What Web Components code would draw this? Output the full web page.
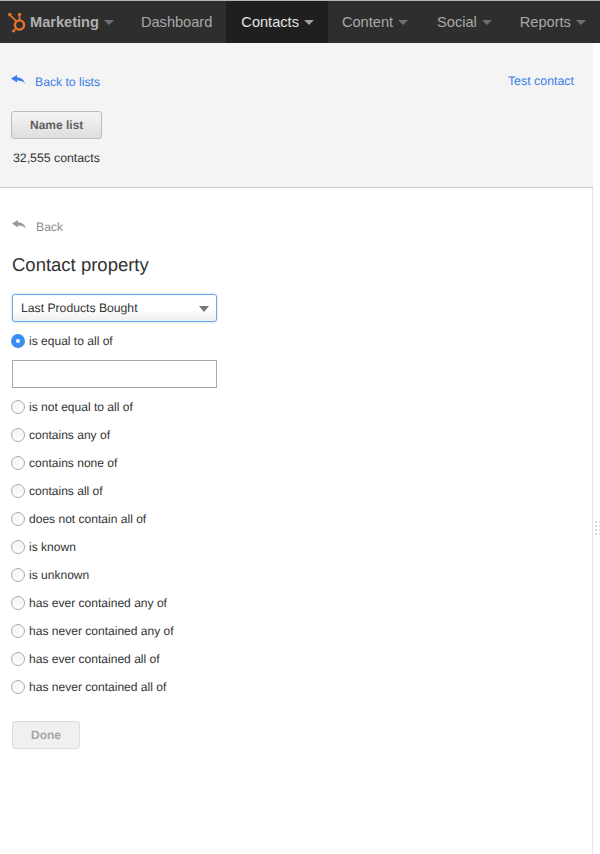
<!DOCTYPE html>
<html>
<head>
<meta charset="utf-8">
<title>Contact property</title>
<style>
  html, body { margin: 0; padding: 0; background: #fff; }
  body { font-family: "Liberation Sans", Arial, sans-serif; font-size: 12px; color: #333; text-rendering: geometricPrecision; }
</style>
</head>
<body>
<app-shell>
  <top-nav>
    <nav-item brand caret>Marketing</nav-item>
    <nav-item>Dashboard</nav-item>
    <nav-item active caret>Contacts</nav-item>
    <nav-item wide caret>Content</nav-item>
    <nav-item caret>Social</nav-item>
    <nav-item caret>Reports</nav-item>
  </top-nav>
  <list-header count="32,555 contacts"></list-header>
  <property-form></property-form>
</app-shell>

<script>
// small reply arrow used by both back links
const replyArrow = (color) => `
  <svg width="14" height="9" viewBox="0 0 14 11" preserveAspectRatio="none" aria-hidden="true">
    <path fill="${color}" d="M0 4.2 6 0v2.6c4 .2 7 2.3 8 8.4-1.6-3.6-4.2-4.4-8-4.4v2.6z"/>
  </svg>`;

class AppShell extends HTMLElement {
  constructor() {
    super();
    this.attachShadow({ mode: 'open' });
    this.shadowRoot.innerHTML = `
      <style>
        :host { display: block; width: 600px; height: 854px; overflow: hidden; position: relative; }
        .grip {
          position: absolute; left: 595px; top: 521px;
          display: grid; grid-template-columns: 2px 1px; column-gap: 2px; row-gap: 2px;
        }
        .grip i { display: block; height: 2px; background: #ddd; }
      </style>
      <slot></slot>
      <div class="grip">${'<i></i>'.repeat(8)}</div>
    `;
  }
}

class TopNav extends HTMLElement {
  constructor() {
    super();
    this.attachShadow({ mode: 'open' });
    this.shadowRoot.innerHTML = `
      <style>
        :host {
          display: flex; height: 42px; padding-top: 1px;
          background: linear-gradient(#b5b5b5 0 1px, #2e2e2e 1px);
        }
      </style>
      <slot></slot>
    `;
  }
}

class NavItem extends HTMLElement {
  constructor() {
    super();
    this.attachShadow({ mode: 'open' });
    const brand = this.hasAttribute('brand');
    const logo = brand ? `
      <svg class="logo" width="20" height="22" viewBox="0 0 20 22" aria-hidden="true">
        <g fill="none" stroke="#e8722c">
          <circle cx="12.5" cy="14" r="4.6" stroke-width="2.4"/>
          <path stroke-width="1.7" d="M12.5 9V4M3 4l6.2 6.2M7.5 19l2-2"/>
        </g>
        <g fill="#e8722c">
          <circle cx="12.5" cy="3.4" r="1.7"/>
          <circle cx="2.8" cy="3.6" r="1.8"/>
          <circle cx="6.6" cy="19.8" r="1.6"/>
        </g>
      </svg>` : '';
    const caret = this.hasAttribute('caret') ? '<span class="caret"></span>' : '';
    this.shadowRoot.innerHTML = `
      <style>
        :host {
          display: flex; align-items: center; box-sizing: border-box; height: 42px;
          padding: 0 14px; font-size: 14.6px; color: #a9a9a9; white-space: nowrap;
          text-rendering: auto;
        }
        :host([brand]) { padding: 0 13px 0 7px; font-weight: bold; color: #b0b0b0; }
        :host([active]) { background: #1f1f1f; color: #e4e4e4; padding: 0 14px 0 15px; }
        :host([wide]) { padding-right: 15px; }
        .logo { margin-right: 3px; margin-top: -1px; }
        .caret {
          width: 0; height: 0; margin-left: 5px; margin-top: 1px;
          border-left: 5px solid transparent; border-right: 5px solid transparent;
          border-top: 5px solid #6e6e6e;
        }
        :host([active]) .caret { border-top-color: #a0a0a0; }
      </style>
      ${logo}<slot></slot>${caret}
    `;
  }
}

class BackLink extends HTMLElement {
  constructor() {
    super();
    this.attachShadow({ mode: 'open' });
    const color = this.getAttribute('color') || '#3a7fe8';
    const iconColor = this.getAttribute('icon-color') || color;
    this.shadowRoot.innerHTML = `
      <style>
        :host { display: inline-flex; align-items: flex-start; font-size: 12.2px; color: ${color}; line-height: 14px; }
        svg { margin-right: 10px; margin-top: 1px; flex: none; }
        span { padding-top: 1px; }
      </style>
      ${replyArrow(iconColor)}<span><slot></slot></span>
    `;
  }
}

class HsButton extends HTMLElement {
  constructor() {
    super();
    this.attachShadow({ mode: 'open' });
    this.shadowRoot.innerHTML = `
      <style>
        :host {
          display: inline-flex; align-items: center; justify-content: center; box-sizing: border-box;
          height: 28px; padding: 0 18px; border: 1px solid #bdbdbd; border-radius: 3px;
          font-size: 12px; font-weight: bold; color: #5f5f5f;
          background: linear-gradient(#f5f5f5, #dedede);
        }
        :host([disabled]) {
          padding: 0 18px; border-color: #dcdcdc; color: #a5a5a5;
          background: #f0f0f0;
        }
      </style>
      <slot></slot>
    `;
  }
}

class ListHeader extends HTMLElement {
  constructor() {
    super();
    this.attachShadow({ mode: 'open' });
    this.shadowRoot.innerHTML = `
      <style>
        :host {
          display: block; box-sizing: border-box; width: 593px; height: 145px;
          padding: 31px 19px 0 11px; background: #f4f4f4; border-bottom: 1px solid #c9c9c9;
        }
        .top { display: flex; justify-content: space-between; height: 37px; }
        .test { font-size: 12.4px; line-height: 14px; color: #3a7fe8; }
        .count { margin: 12px 0 0 2px; font-size: 12.3px; line-height: 14px; color: #333; }
      </style>
      <div class="top">
        <back-link>Back to lists</back-link>
        <span class="test">Test contact</span>
      </div>
      <hs-button>Name list</hs-button>
      <div class="count">${this.getAttribute('count')}</div>
    `;
  }
}

class SelectBox extends HTMLElement {
  constructor() {
    super();
    this.attachShadow({ mode: 'open' });
    this.shadowRoot.innerHTML = `
      <style>
        :host {
          display: flex; align-items: center; justify-content: space-between; box-sizing: border-box;
          width: 205px; height: 28px; padding: 0 7px 0 8px;
          border: 1px solid #6aa9ea; border-radius: 3px;
          box-shadow: 0 0 2px rgba(80, 150, 230, .6);
          background: linear-gradient(#fff 55%, #efefef);
          font-size: 12.2px; color: #333;
        }
        .caret {
          width: 0; height: 0; margin-top: 2px;
          border-left: 5px solid transparent; border-right: 5px solid transparent;
          border-top: 6px solid #777;
        }
      </style>
      <slot></slot><span class="caret"></span>
    `;
  }
}

class RadioOption extends HTMLElement {
  constructor() {
    super();
    this.attachShadow({ mode: 'open' });
    this.shadowRoot.innerHTML = `
      <style>
        :host { display: flex; align-items: center; height: 28px; font-size: 12.05px; color: #333; }
        .dot {
          box-sizing: border-box; width: 14px; height: 14px; margin: -1px 4px 0 11px; border-radius: 50%;
          border: 1px solid #a9a9a9; flex: none; background: linear-gradient(#f4f4f4, #fff);
          display: flex; align-items: center; justify-content: center;
        }
        :host([checked]) .dot { border: none; background: #3a8ef0; }
        :host([checked]) .dot::after {
          content: ''; width: 4px; height: 4px; border-radius: 50%; background: #fff;
        }
      </style>
      <span class="dot"></span><slot></slot>
    `;
  }
}

class PropertyForm extends HTMLElement {
  constructor() {
    super();
    this.attachShadow({ mode: 'open' });
    const options = [
      'is not equal to all of', 'contains any of', 'contains none of', 'contains all of',
      'does not contain all of', 'is known', 'is unknown', 'has ever contained any of',
      'has never contained any of', 'has ever contained all of', 'has never contained all of'
    ];
    this.shadowRoot.innerHTML = `
      <style>
        :host { display: block; width: 593px; box-sizing: border-box; height: 667px; border-right: 1px solid #e6e6e6; }
        .back { padding: 30px 0 0 12px; height: 30px; }
        h2 { margin: 0; padding: 0 0 0 12px; font-size: 18.5px; line-height: 22px; font-weight: normal; color: #333; height: 40px; margin-top: 6px; }
        .field { padding: 0 0 5px 12px; }
        .value {
          box-sizing: border-box; width: 205px; height: 28px; margin: 5px 0 5px 12px;
          border: 1px solid #a8a8a8; background: #fff;
        }
        .done { padding: 20px 0 0 12px; }
      </style>
      <div class="back"><back-link color="#8c8c8c" icon-color="#999">Back</back-link></div>
      <h2>Contact property</h2>
      <div class="field"><select-box>Last Products Bought</select-box></div>
      <radio-option checked>is equal to all of</radio-option>
      <div class="value"></div>
      ${options.map((o) => `<radio-option>${o}</radio-option>`).join('')}
      <div class="done"><hs-button disabled>Done</hs-button></div>
    `;
  }
}

customElements.define('app-shell', AppShell);
customElements.define('top-nav', TopNav);
customElements.define('nav-item', NavItem);
customElements.define('back-link', BackLink);
customElements.define('hs-button', HsButton);
customElements.define('list-header', ListHeader);
customElements.define('select-box', SelectBox);
customElements.define('radio-option', RadioOption);
customElements.define('property-form', PropertyForm);
</script>
</body>
</html>
